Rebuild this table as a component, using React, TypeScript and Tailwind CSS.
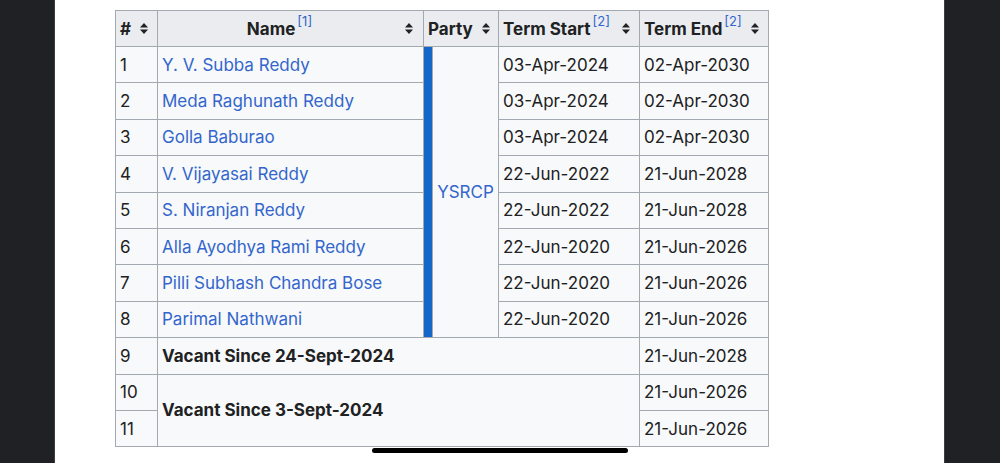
import React from "react";

type Member = { no: number; name: string; start: string; end: string };

const members: Member[] = [
  { no: 1, name: "Y. V. Subba Reddy", start: "03-Apr-2024", end: "02-Apr-2030" },
  { no: 2, name: "Meda Raghunath Reddy", start: "03-Apr-2024", end: "02-Apr-2030" },
  { no: 3, name: "Golla Baburao", start: "03-Apr-2024", end: "02-Apr-2030" },
  { no: 4, name: "V. Vijayasai Reddy", start: "22-Jun-2022", end: "21-Jun-2028" },
  { no: 5, name: "S. Niranjan Reddy", start: "22-Jun-2022", end: "21-Jun-2028" },
  { no: 6, name: "Alla Ayodhya Rami Reddy", start: "22-Jun-2020", end: "21-Jun-2026" },
  { no: 7, name: "Pilli Subhash Chandra Bose", start: "22-Jun-2020", end: "21-Jun-2026" },
  { no: 8, name: "Parimal Nathwani", start: "22-Jun-2020", end: "21-Jun-2026" },
];

function SortIcon() {
  return (
    <svg width="8" height="11" viewBox="0 0 8 11" className="shrink-0">
      <path d="M4 0 L8 4.5 L0 4.5 Z" fill="#202122" />
      <path d="M0 6.5 L8 6.5 L4 11 Z" fill="#202122" />
    </svg>
  );
}

function Ref({ n }: { n: number }) {
  return <sup className="relative -top-[2px] ml-[2px] align-super text-[13px] font-normal text-[#3366cc]">[{n}]</sup>;
}

const cell = "border border-[#a2a9b1] px-[4px] align-middle";

export default function App() {
  return (
    <div className="flex h-screen w-full overflow-hidden bg-[#202124] font-['Inter',sans-serif] text-[#202122]">
      <div className="w-[55px] shrink-0 border-r border-[#3c3d40]" />
      <main className="relative flex-1 bg-white pl-[60px] pt-[10px]">
        <table className="border-collapse bg-[#f8f9fa] text-[17px] leading-[20px]">
          <thead>
            <tr className="h-[36px] bg-[#eaecf0] font-bold">
              <th className={`${cell} w-[42px] pr-[9px]`}>
                <div className="flex items-center justify-between">
                  <span>#</span>
                  <SortIcon />
                </div>
              </th>
              <th className={`${cell} w-[266px] pr-[10px]`}>
                <div className="flex items-center">
                  <span className="flex-1 pr-[8px] text-center">
                    Name
                    <Ref n={1} />
                  </span>
                  <SortIcon />
                </div>
              </th>
              <th colSpan={2} className={`${cell} w-[75px] pr-[8px]`}>
                <div className="flex items-center justify-between">
                  <span>Party</span>
                  <SortIcon />
                </div>
              </th>
              <th className={`${cell} w-[141px] pr-[9px]`}>
                <div className="flex items-center justify-between">
                  <span>
                    Term Start
                    <Ref n={2} />
                  </span>
                  <SortIcon />
                </div>
              </th>
              <th className={`${cell} w-[129px] pr-[9px]`}>
                <div className="flex items-center justify-between">
                  <span>
                    Term End
                    <Ref n={2} />
                  </span>
                  <SortIcon />
                </div>
              </th>
            </tr>
          </thead>
          <tbody>
            {members.map((m, i) => (
              <tr key={m.no} className="h-[36.4px]">
                <td className={cell}>{m.no}</td>
                <td className={cell}>
                  <a className="text-[#3366cc]">{m.name}</a>
                </td>
                {i === 0 && (
                  <>
                    <td rowSpan={8} className="w-[9px] border border-[#a2a9b1] bg-[#1466c9] p-0" />
                    <td rowSpan={8} className={`${cell} w-[66px] text-center`}>
                      <a className="text-[#3366cc]">YSRCP</a>
                    </td>
                  </>
                )}
                <td className={cell}>{m.start}</td>
                <td className={cell}>{m.end}</td>
              </tr>
            ))}
            <tr className="h-[36.4px]">
              <td className={cell}>9</td>
              <td colSpan={4} className={`${cell} font-bold`}>
                Vacant Since 24-Sept-2024
              </td>
              <td className={cell}>21-Jun-2028</td>
            </tr>
            <tr className="h-[36.4px]">
              <td className={cell}>10</td>
              <td colSpan={4} rowSpan={2} className={`${cell} font-bold`}>
                Vacant Since 3-Sept-2024
              </td>
              <td className={cell}>21-Jun-2026</td>
            </tr>
            <tr className="h-[36.4px]">
              <td className={cell}>11</td>
              <td className={cell}>21-Jun-2026</td>
            </tr>
          </tbody>
        </table>
        <div className="absolute left-[317px] top-[448px] h-[5px] w-[256px] rounded-full bg-black" />
      </main>
      <div className="w-[56px] shrink-0 border-l border-[#3c3d40]" />
    </div>
  );
}
